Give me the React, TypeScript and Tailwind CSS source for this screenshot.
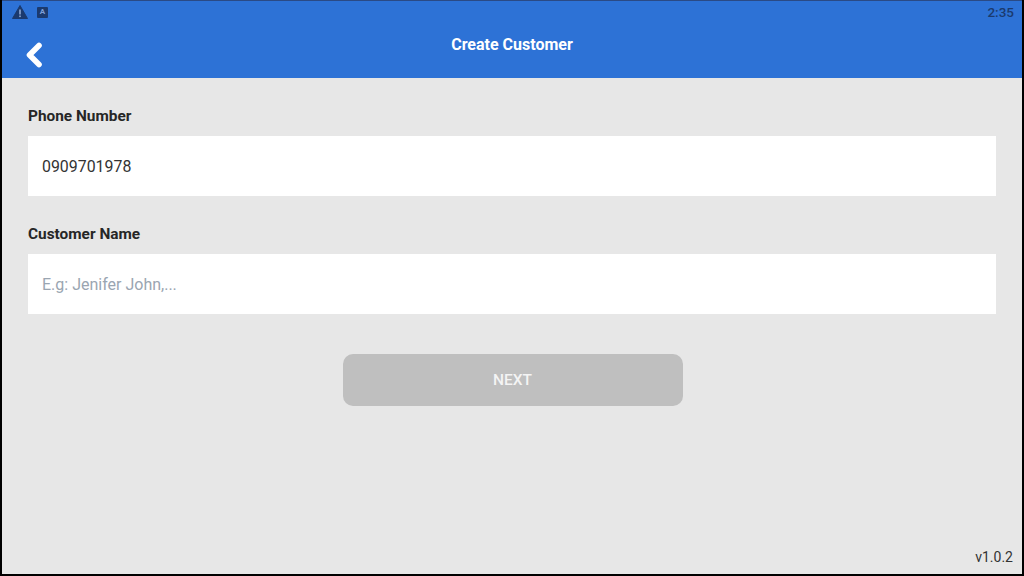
export default function App() {
  return (
    <div className="h-[576px] w-[1024px] overflow-hidden bg-black font-['Roboto',sans-serif]">
      <div className="mx-[2px] flex h-[574px] flex-col bg-[#e7e7e7]">
        {/* Header */}
        <div className="relative h-[78px] shrink-0 border-t border-[#2a4a85] bg-[#2d72d6]">
          <div className="flex h-[22px] items-center justify-between pl-[10px] pr-[8px]">
            <div className="flex items-center gap-[9px]">
              <svg width="16" height="14" viewBox="0 0 16 14">
                <path d="M8 0.5 L15.5 13.5 L0.5 13.5 Z" fill="#1b3a6e" stroke="#1b3a6e" strokeLinejoin="round" />
                <rect x="7.2" y="4.5" width="1.6" height="5" fill="#8fa9d2" />
                <rect x="7.2" y="10.5" width="1.6" height="1.6" fill="#8fa9d2" />
              </svg>
              <div className="flex h-[11px] w-[11px] items-center justify-center rounded-[1px] bg-[#1b3a6e] text-[8px] font-bold leading-none text-[#7d9fd6]">
                A
              </div>
            </div>
            <span className="text-[13.5px] font-medium text-[#1b3a6e]">2:35</span>
          </div>
          <svg className="absolute left-[22px] top-[41px]" width="20" height="26" viewBox="0 0 20 26">
            <path d="M15 3.5 L5.5 13 L15 22.5" fill="none" stroke="white" strokeWidth="5.6" strokeLinecap="round" strokeLinejoin="round" />
          </svg>
          <div className="absolute inset-x-0 top-[34px] text-center text-[16px] font-bold leading-5 text-white">Create Customer</div>
        </div>

        {/* Form */}
        <div className="flex flex-1 flex-col pl-[26px] pr-[26px] pt-[28px]">
          <label className="text-[15.4px] font-bold leading-5 text-[#262626]">Phone Number</label>
          <div className="mt-[10px] flex h-[60px] items-center bg-white px-[14px] pt-[2px] text-[15.9px] text-[#333333]">0909701978</div>
          <label className="mt-[28px] text-[15.4px] font-bold leading-5 text-[#262626]">Customer Name</label>
          <div className="mt-[10px] flex h-[59.5px] items-center bg-white px-[14px] pt-[2px] text-[16px] text-[#9aa5b1]">E.g: Jenifer John,...</div>
          <div className="mt-[40.5px] flex justify-center">
            <button className="ml-[1px] h-[52px] w-[340px] rounded-[10px] bg-[#bfbfbf] pt-[2px] text-[15.5px] font-medium text-[#f4f4f4]">NEXT</button>
          </div>
          <div className="mr-[-17px] mt-auto pb-[7px] text-right text-[14px] leading-5 text-[#333333]">v1.0.2</div>
        </div>
      </div>
    </div>
  );
}
